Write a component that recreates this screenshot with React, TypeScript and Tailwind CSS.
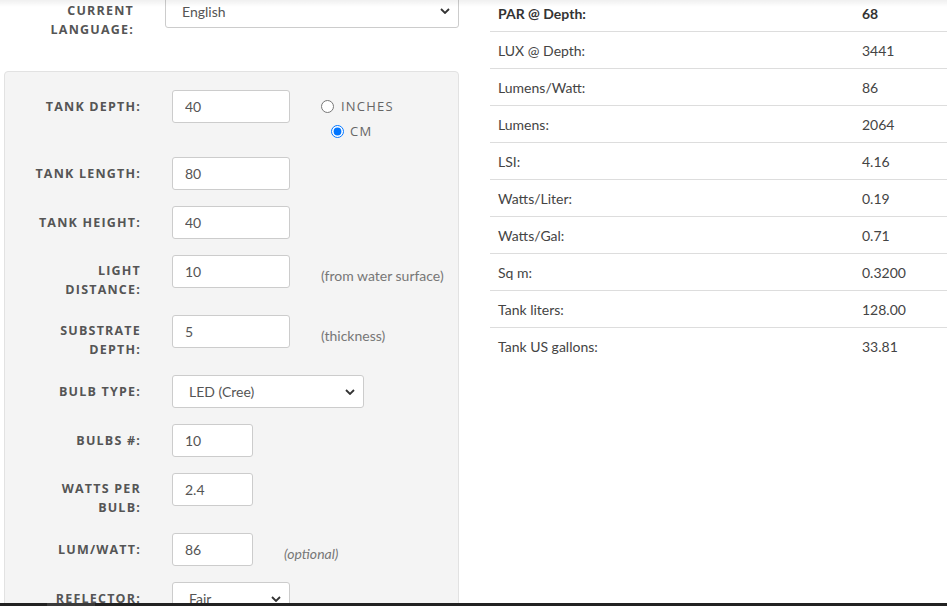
import React from 'react';

const labelCls =
  "w-[136px] shrink-0 text-right font-['Open_Sans',sans-serif] text-[12.5px] font-bold uppercase leading-[19px] tracking-[1.2px] text-[#555]";

const inputCls =
  'h-[33px] rounded-[3px] border border-[#ccc] bg-white pl-[12px] text-[14px] text-[#555] outline-none';

function Chevron() {
  return (
    <svg
      className="pointer-events-none absolute right-[9px] top-1/2 -translate-y-1/2"
      width="10"
      height="6"
      viewBox="0 0 10 6"
    >
      <path d="M1 1l4 4 4-4" fill="none" stroke="#333" strokeWidth="1.8" />
    </svg>
  );
}

function Select({ value, width, pl }: { value: string; width: string; pl: string }) {
  return (
    <div className={`relative h-[33px] ${width}`}>
      <div
        className={`flex h-full w-full items-center rounded-[3px] border border-[#ccc] bg-white ${pl} text-[14px] text-[#555]`}
      >
        {value}
      </div>
      <Chevron />
    </div>
  );
}

interface RowProps {
  label: React.ReactNode;
  twoLine?: boolean;
  children: React.ReactNode;
  hint?: React.ReactNode;
  aside?: React.ReactNode;
}

function Row({ label, twoLine, children, hint, aside }: RowProps) {
  return (
    <div className="mb-4 flex items-start">
      <div className={`${labelCls} ${twoLine ? 'pt-[6px]' : 'pt-[7px]'}`}>{label}</div>
      <div className="ml-[31px]">{children}</div>
      {hint && (
        <div className="ml-[31px] pt-[11px] text-[14px] leading-[19px] text-[#777]">{hint}</div>
      )}
      {aside}
    </div>
  );
}

const results: [string, string][] = [
  ['PAR @ Depth:', '68'],
  ['LUX @ Depth:', '3441'],
  ['Lumens/Watt:', '86'],
  ['Lumens:', '2064'],
  ['LSI:', '4.16'],
  ['Watts/Liter:', '0.19'],
  ['Watts/Gal:', '0.71'],
  ['Sq m:', '0.3200'],
  ['Tank liters:', '128.00'],
  ['Tank US gallons:', '33.81'],
];

export default function App() {
  return (
    <div className="relative h-[606px] w-[947px] overflow-hidden bg-white font-['Lato',sans-serif]">
      <div className="-mt-[6px] flex">
        {/* left: calculator form */}
        <div className="w-[459px] shrink-0">
          <div className="flex items-start">
            <div className="w-[134px] shrink-0 pt-[7px] text-right font-['Open_Sans',sans-serif] text-[12.5px] font-bold uppercase leading-[19px] tracking-[1.2px] text-[#555]">
              Current
              <br />
              Language:
            </div>
            <div className="relative ml-[31px] h-[34px] w-[294px]">
              <div className="flex h-full items-center rounded-[3px] border border-[#ccc] bg-white pl-[16px] text-[14px] text-[#555]">
                English
              </div>
              <Chevron />
            </div>
          </div>

          <div className="ml-[4px] mt-[32px] h-[600px] rounded-[4px] border border-[#e2e2e2] bg-[#f4f4f4] pt-[18px]">
            <Row
              label="Tank Depth:"
              aside={
                <div className="ml-[31px] pt-[7px] font-['Open_Sans',sans-serif] text-[13px] uppercase leading-[19px] tracking-[1.2px] text-[#666]">
                  <label className="flex h-[19px] items-center gap-[7px]">
                    <input type="radio" name="unit" className="m-0 h-[13px] w-[13px]" />
                    Inches
                  </label>
                  <label className="ml-[10px] mt-[6px] flex h-[19px] items-center gap-[6px]">
                    <input
                      type="radio"
                      name="unit"
                      defaultChecked
                      className="m-0 h-[13px] w-[13px] accent-[#0075ff]"
                    />
                    cm
                  </label>
                </div>
              }
            >
              <input className={`${inputCls} w-[118px]`} defaultValue="40" />
            </Row>
            <Row label="Tank Length:">
              <input className={`${inputCls} w-[118px]`} defaultValue="80" />
            </Row>
            <Row label="Tank Height:">
              <input className={`${inputCls} w-[118px]`} defaultValue="40" />
            </Row>
            <Row
              twoLine
              label={
                <>
                  Light
                  <br />
                  Distance:
                </>
              }
              hint="(from water surface)"
            >
              <input className={`${inputCls} w-[118px]`} defaultValue="10" />
            </Row>
            <Row
              twoLine
              label={
                <>
                  Substrate
                  <br />
                  Depth:
                </>
              }
              hint="(thickness)"
            >
              <input className={`${inputCls} w-[118px]`} defaultValue="5" />
            </Row>
            <Row label="Bulb Type:">
              <Select value="LED (Cree)" width="w-[192px]" pl="pl-[16px]" />
            </Row>
            <Row label="Bulbs #:">
              <input className={`${inputCls} w-[81px]`} defaultValue="10" />
            </Row>
            <Row
              twoLine
              label={
                <>
                  Watts per
                  <br />
                  Bulb:
                </>
              }
            >
              <input className={`${inputCls} w-[81px]`} defaultValue="2.4" />
            </Row>
            <Row label="Lum/Watt:" hint={<span className="italic">(optional)</span>}>
              <input className={`${inputCls} w-[81px]`} defaultValue="86" />
            </Row>
            <Row label="Reflector:">
              <Select value="Fair" width="w-[118px]" pl="pl-[16px]" />
            </Row>
          </div>
        </div>

        {/* right: results table */}
        <div className="ml-[31px] mt-[1px] flex-1 text-[14px] text-[#444]">
          {results.map(([k, v], i) => (
            <div
              key={k}
              className={`grid h-[37px] grid-cols-[364px_1fr] items-center ${
                i < results.length - 1 ? 'border-b border-[#ddd]' : ''
              } ${i === 0 ? 'font-bold text-[#333]' : ''}`}
            >
              <div className="pl-[8px]">{k}</div>
              <div className="pl-[8px]">{v}</div>
            </div>
          ))}
        </div>
      </div>

      {/* top scroll shadow */}
      <div className="pointer-events-none absolute inset-x-0 top-0 h-[7px] bg-gradient-to-b from-black/[0.06] to-transparent" />
      {/* bottom strip */}
      <div className="absolute inset-x-0 bottom-0 h-[3px] bg-[#222]">
        <div className="ml-[47px] h-full w-[48px] bg-[#3a3a3a]" />
      </div>
    </div>
  );
}
